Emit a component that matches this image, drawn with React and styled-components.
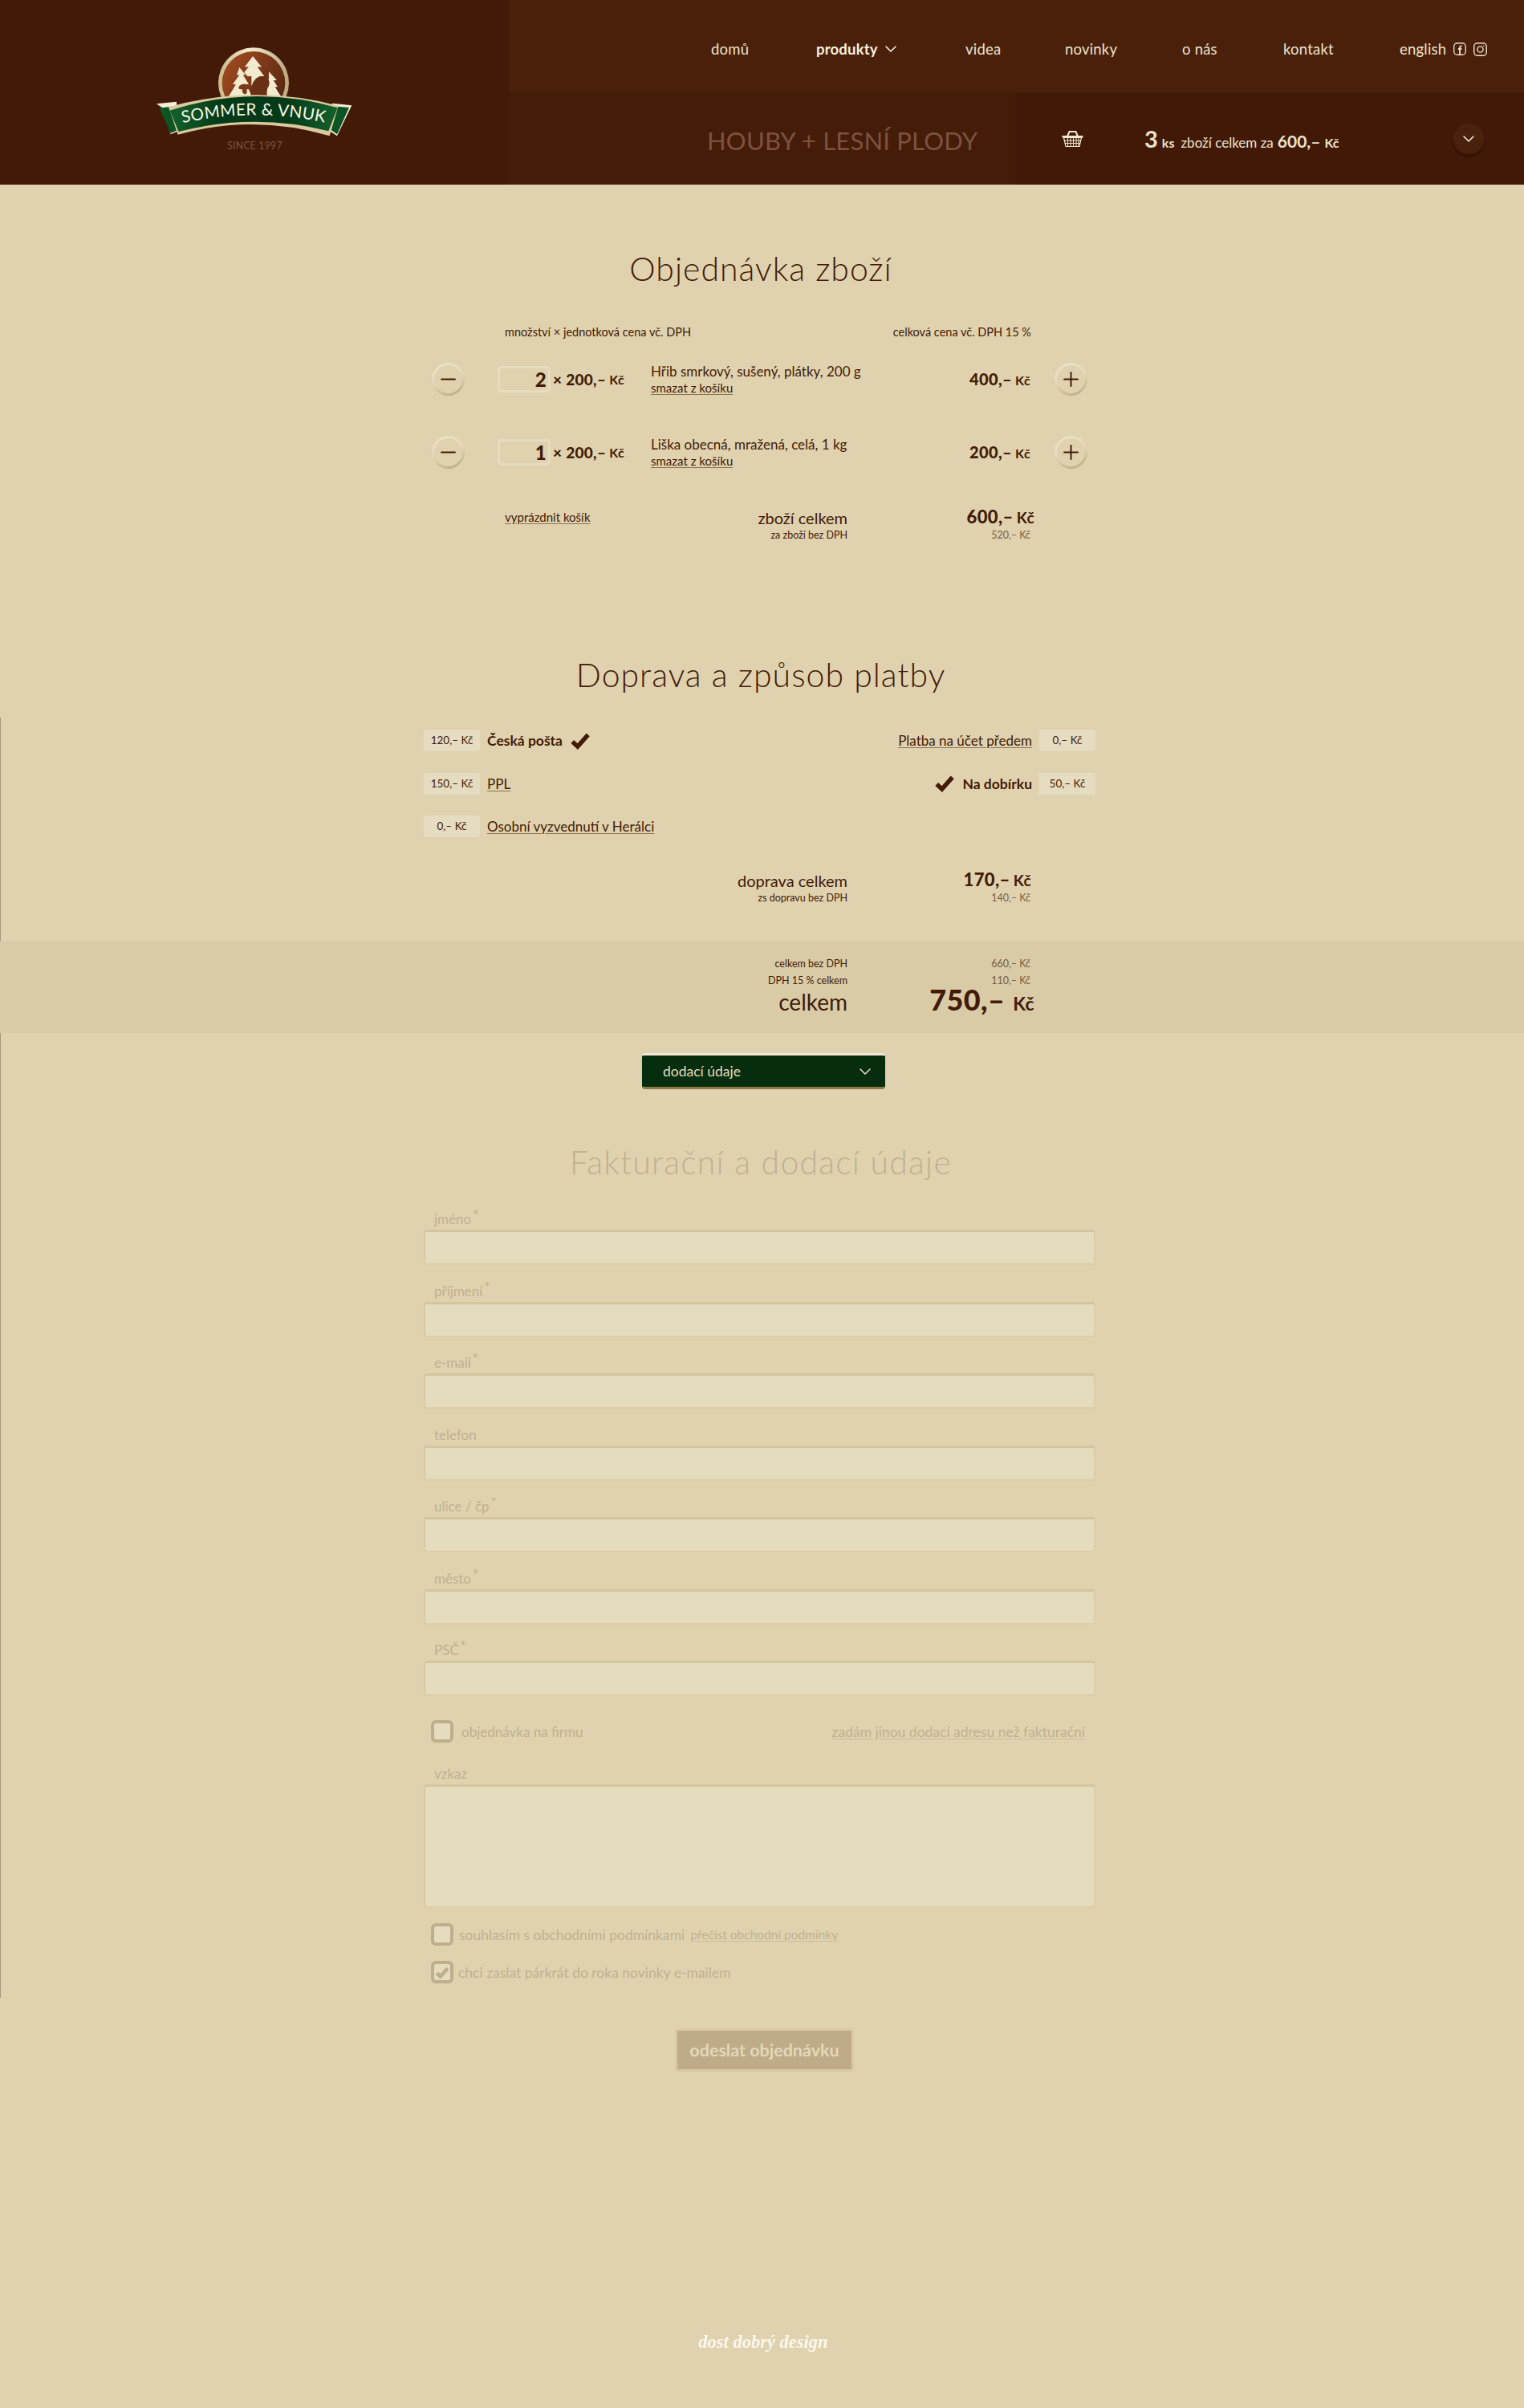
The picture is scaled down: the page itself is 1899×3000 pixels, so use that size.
import React from "react";
import styled, { createGlobalStyle } from "styled-components";
import { ChevronDown, Minus, Plus } from "lucide-react";

const DARK = "#421a07";
const FADED = "#bfb192";

const GlobalStyle = createGlobalStyle`
  * { box-sizing: border-box; }
  body {
    margin: 0;
    background: #e0d2ae;
    color: ${DARK};
    font-family: Lato, "Open Sans", sans-serif;
  }
`;

const Page = styled.div`
  min-height: 3000px;
  background: #e0d2ae;
`;

/* header */
const Header = styled.header`
  display: grid;
  grid-template-columns: 635px 630px 1fr;
  grid-template-rows: 115px 115px;
  height: 230px;
  background: #421a07;
  color: #f0e8d4;
`;

const LogoCell = styled.div`
  grid-row: 1 / 3;
  padding: 40px 0 0 170px;
`;

const Nav = styled.nav`
  grid-column: 2 / 4;
  display: grid;
  grid-template-columns: 131px 186px 124px 146px 126px 145px auto;
  align-items: center;
  padding: 7px 0 0 251px;
  height: 115px;
  background: #4a200a;
`;

const NavLink = styled.a`
  display: flex;
  align-items: center;
  gap: ${props => props.$gap || 4}px;
  font-size: 18.5px;
  font-weight: ${props => props.$active ? 700 : 400};
  letter-spacing: 0.2px;
  color: ${props => props.$active ? "#f8f1de" : "#ece3cd"};
`;

const CategoryBar = styled.div`
  display: flex;
  align-items: center;
  padding: 5px 0 0 246px;
  background: #451c08;
  color: #7d5140;
  font-size: 31px;
  letter-spacing: 0.2px;
  white-space: nowrap;
`;

const CartBar = styled.div`
  display: flex;
  align-items: center;
  padding-left: 58px;
  background: #421906;
`;

const CartInfo = styled.div`
  display: flex;
  align-items: baseline;
  margin-left: 76px;
  width: 384px;
  font-size: 17px;
  color: #ece3cd;
  white-space: nowrap;
`;

const CartCount = styled.b`
  font-size: 29px;
  font-weight: 700;
  margin-right: 5px;
`;

const CartStrong = styled.b`
  font-size: ${props => props.$size || 16}px;
  font-weight: 700;
  margin: ${props => props.$margin || "0"};
`;

const RoundToggle = styled.div`
  display: flex;
  align-items: center;
  justify-content: center;
  width: 40px;
  height: 40px;
  border-radius: 50%;
  background: #4a210c;
  box-shadow: 0 2px 2px #2e1104, inset 0 -1px 2px #3a1606;
  color: #f0e8d4;
`;

/* headings */
const Title = styled.h1`
  margin: ${props => props.$margin};
  font-size: 41px;
  font-weight: 300;
  line-height: 48px;
  text-align: center;
  letter-spacing: ${props => props.$spacing || 1}px;
  color: ${props => props.$faded ? FADED : DARK};
  padding-right: ${props => props.$shift || 3}px;
`;

const Content = styled.div`
  width: 837px;
  margin-left: 528px;
`;

/* cart */
const CartHead = styled.div`
  display: flex;
  justify-content: space-between;
  height: 20px;
  margin-top: 45px;
  padding: 0 80px 0 101px;
  font-size: 14.5px;
  line-height: 20px;
`;

const ItemRow = styled.div`
  display: flex;
  align-items: center;
  height: 41px;
  margin-top: ${props => props.$top}px;
  padding: 0 10px;
`;

const RoundButton = styled.button`
  display: flex;
  align-items: center;
  justify-content: center;
  flex: none;
  width: 41px;
  height: 41px;
  padding: 0;
  border: 3px solid transparent;
  border-radius: 50%;
  color: ${DARK};
  background:
    linear-gradient(#e0d2ae, #e0d2ae) padding-box,
    linear-gradient(160deg, #ebe3cb 0%, #e4dabd 45%, #b8a678 100%) border-box;
`;

const Qty = styled.div`
  display: flex;
  align-items: center;
  flex: none;
  width: 191px;
  margin-left: 41px;
  font-size: 19px;
  font-weight: 900;
  letter-spacing: 0.3px;
  white-space: nowrap;
`;

const QtyBox = styled.div`
  width: 66px;
  height: 33px;
  margin-right: 3px;
  padding-right: 2px;
  border: 3px solid #e6dcc1;
  border-radius: 5px;
  font-size: 24px;
  font-weight: 900;
  line-height: 27px;
  text-align: right;
`;

const ItemText = styled.div`
  flex: 1;
  font-size: 17px;
  line-height: 20px;
`;

const TextLink = styled.a`
  display: ${props => props.$block ? "block" : "inline"};
  font-size: ${props => props.$size || 15}px;
  line-height: ${props => props.$line || "inherit"};
  color: ${props => props.$faded ? FADED : DARK};
  text-decoration: underline;
  text-decoration-color: ${props => props.$faded ? "#c9bb9c" : "#8d7355"};
  text-underline-offset: 2px;
  white-space: nowrap;
`;

const Amount = styled.div`
  font-size: ${props => props.$size || 20}px;
  font-weight: 900;
  line-height: ${props => props.$line || 28}px;
  letter-spacing: 0.4px;
  text-align: right;
  white-space: nowrap;
`;

const Unit = styled.span`
  font-size: ${props => props.$size || 16}px;
  font-weight: 700;
  margin-left: ${props => props.$gap || 4}px;
`;

const ItemPrice = styled(Amount)`
  width: 200px;
  margin-right: 30px;
`;

/* summary rows */
const SumRow = styled.div`
  display: grid;
  grid-template-columns: 528px 228px;
  align-items: center;
  margin-top: ${props => props.$top || 0}px;
`;

const SumLabel = styled.div`
  display: flex;
  justify-content: ${props => props.$split ? "space-between" : "flex-end"};
  padding-left: ${props => props.$split ? 101 : 0}px;
  font-size: ${props => props.$size || 12.5}px;
  line-height: ${props => props.$line || 16}px;
  white-space: nowrap;
`;

const SumValue = styled.div`
  font-size: 12.5px;
  line-height: 16px;
  text-align: right;
  opacity: ${props => props.$muted ? 0.65 : 1};
`;

const BigAmount = styled(Amount)`
  margin-right: ${props => props.$pull || 0}px;
`;

/* shipping */
const ShippingSection = styled.section`
  padding: 15px 0 45px;
  margin-top: 29px;
  box-shadow: inset 1px 0 0 #a8987a;
`;

const ChoiceGrid = styled.div`
  display: grid;
  grid-template-columns: 1fr 1fr;
  grid-auto-rows: 27px;
  row-gap: 26.5px;
  margin-bottom: 39px;
`;

const Choice = styled.div`
  display: flex;
  align-items: center;
  justify-content: ${props => props.$right ? "flex-end" : "flex-start"};
  gap: 9px;
  font-size: 17.5px;
`;

const PriceChip = styled.div`
  flex: none;
  width: 70px;
  height: 27px;
  border-radius: 3px;
  background: #e6dcc1;
  font-size: 13.5px;
  line-height: 27px;
  text-align: center;
`;

const ChoiceName = styled.b`
  font-weight: 700;
  white-space: nowrap;
`;

/* totals band */
const TotalBand = styled.section`
  height: 115px;
  padding-top: 21px;
  background: #d9cba6;
`;

/* form */
const FormSection = styled.section`
  padding: 25px 0 18px;
  box-shadow: inset 1px 0 0 #a8987a;
`;

const DeliveryButton = styled.div`
  display: flex;
  align-items: center;
  justify-content: space-between;
  width: 303px;
  height: 45px;
  margin-left: 800px;
  padding: 0 13px 0 26px;
  border-top: 3px solid #f0e9d3;
  border-bottom: 3px solid #8c7a45;
  border-radius: 4px;
  background: #062d0d;
  color: #e6dcbd;
  font-size: 17.5px;
`;

const Field = styled.div`
  width: 837px;
  margin-top: ${props => props.$top || 0}px;
`;

const FieldLabel = styled.label`
  display: flex;
  align-items: flex-end;
  height: 45.5px;
  padding: 0 0 3px 13px;
  font-size: 17px;
  line-height: 20px;
  color: ${FADED};
`;

const Star = styled.sup`
  font-size: 17px;
  line-height: 0;
  position: relative;
  top: -15px;
  margin-left: 2px;
  vertical-align: baseline;
`;

const TextInput = styled.input`
  display: block;
  width: 837px;
  height: 44px;
  border: solid #dccea8;
  border-width: 3px 2px 2px;
  border-radius: 4px;
  background: #e5dbbd;
  border-top-color: #d3c59e;
  border-left-color: #d6c9a3;
  outline: none;
`;

const TextBox = styled(TextInput).attrs({ as: "textarea" })`
  height: 154px;
  resize: none;
`;

const CheckRow = styled.div`
  display: flex;
  align-items: center;
  justify-content: space-between;
  height: 28px;
  margin-top: ${props => props.$top}px;
  padding: 0 13px 0 9px;
  color: ${FADED};
  font-size: ${props => props.$size || 17.5}px;
`;

const CheckLabel = styled.div`
  display: flex;
  align-items: center;
  gap: ${props => props.$gap || 10}px;
  white-space: nowrap;
`;

const CheckBox = styled.div`
  display: flex;
  align-items: center;
  justify-content: center;
  width: 28px;
  height: 28px;
  border: 4px solid #bfae8c;
  border-radius: 6px;
  background: #e5dbbd;
`;

const SubmitButton = styled.div`
  width: 223px;
  height: 54px;
  margin: 38px 0 0 841px;
  border: 3px solid #d8caa4;
  border-radius: 4px;
  background: #bfab89;
  color: #e4d8b6;
  font-size: 21.5px;
  font-weight: 700;
  line-height: 48px;
  text-align: center;
  white-space: nowrap;
`;

const FooterNote = styled.footer`
  margin-top: 324px;
  padding-left: 3px;
  color: #fbf8ef;
  font-family: "Liberation Serif", serif;
  font-size: 22.5px;
  font-style: italic;
  font-weight: 700;
  line-height: 26px;
  text-align: center;
`;

function Logo() {
  return (
    <svg width="290" height="170" viewBox="0 0 870 510">
      <defs>
        <linearGradient id="medal" x1="0" y1="0" x2="1" y2="0.6">
          <stop offset="0" stopColor="#a84e22" />
          <stop offset="1" stopColor="#5a2912" />
        </linearGradient>
        <linearGradient id="ring" x1="0" y1="0" x2="1" y2="0">
          <stop offset="0" stopColor="#c9b98a" />
          <stop offset="0.45" stopColor="#f4ecd2" />
          <stop offset="1" stopColor="#b9a67a" />
        </linearGradient>
        <linearGradient id="band" x1="0" y1="0" x2="1" y2="0">
          <stop offset="0" stopColor="#14622c" />
          <stop offset="0.3" stopColor="#043a17" />
          <stop offset="0.7" stopColor="#043a17" />
          <stop offset="1" stopColor="#14622c" />
        </linearGradient>
        <path id="ribbonLine" d="M172 340 Q440 282 705 338" />
      </defs>
      <circle cx="438" cy="190" r="132" fill="url(#ring)" />
      <circle cx="438" cy="190" r="118" fill="url(#medal)" />
      <path
        fill="#f3ebcf"
        d="M435 90 L468 130 L452 130 L478 165 L458 165 L478 190 L430 200 L430 165 L415 165 L403 150 L420 130 L405 130 Z"
      />
      <path fill="#f3ebcf" d="M385 132 L408 160 L398 160 L420 195 L410 195 L432 240 L345 240 L372 195 L360 195 L385 160 L375 160 Z" />
      <path fill="#f3ebcf" d="M495 148 L525 180 L512 180 L528 205 L518 205 L540 240 L480 240 L495 170 Z" />
      <path fill="#6a3016" d="M428 240 C425 200 440 165 470 165 C495 165 505 190 490 210 C486 225 488 232 490 240 Z" />
      <path fill="#7a3a1a" d="M382 208 C385 190 420 190 424 208 C424 214 414 214 412 214 C414 222 414 232 408 232 C398 232 394 224 396 214 C390 214 382 214 382 208 Z" />
      <path fill="#f4eeda" d="M75 268 L150 260 L152 372 L128 382 L100 285 Z" />
      <path fill="#0c5424" d="M86 284 L128 278 L150 368 L128 378 Z" />
      <path fill="#f4eeda" d="M805 274 L732 266 L726 372 L750 388 Z" />
      <path fill="#0c5424" d="M795 282 L752 278 L728 366 L750 382 Z" />
      <path fill="#d9c99c" d="M120 280 Q440 192 755 275 L722 388 Q440 304 155 383 Z" />
      <path fill="url(#band)" d="M124 293 Q440 192 752 283 L718 370 Q440 300 158 372 Z" />
      <text fontFamily="Lato, sans-serif" fontSize="62" fill="#fbf6e6" textAnchor="middle" letterSpacing="1">
        <textPath href="#ribbonLine" startOffset="50%">SOMMER &amp; VNUK</textPath>
      </text>
      <text x="442" y="438" fontFamily="Lato, sans-serif" fontSize="38" fill="#7d5140" textAnchor="middle">SINCE 1997</text>
    </svg>
  );
}

function FacebookIcon() {
  return (
    <svg width="16" height="16" viewBox="0 0 16 16" fill="none" stroke="#ece3cd">
      <rect x="0.75" y="0.75" width="14.5" height="14.5" rx="4" strokeWidth="1.3" />
      <path d="M10.5 4.6 C8.8 4.2 8 5 8 6.4 V15 M6 8 H10.2" strokeWidth="1.8" />
    </svg>
  );
}

function InstagramIcon() {
  return (
    <svg width="17" height="17" viewBox="0 0 17 17" fill="none" stroke="#ece3cd">
      <rect x="0.75" y="0.75" width="15.5" height="15.5" rx="4" strokeWidth="1.4" />
      <circle cx="8.5" cy="8.5" r="3.6" strokeWidth="1.4" />
      <circle cx="12.8" cy="4.2" r="0.7" fill="#ece3cd" stroke="none" />
    </svg>
  );
}

function BasketIcon() {
  return (
    <svg width="27" height="22" viewBox="0 0 27 22" fill="none" stroke="#f0e8d4" style={{ flex: "none" }}>
      <path d="M7 8 L9.5 2 H17.5 L20 8" strokeWidth="2" />
      <path fill="#f0e8d4" d="M0.5 7 H26.5 V9.5 H0.5 Z" stroke="none" />
      <path d="M2.5 9.5 L5 20.5 H22 L24.5 9.5 Z" strokeWidth="1.2" />
      <path d="M3 13 H24 M4 16.5 H23 M7.5 10 V20 M11 10 V20 M14.5 10 V20 M18 10 V20 M21 10 V20" strokeWidth="1" />
    </svg>
  );
}

function Tick({ color = DARK, width = 26, height = 22, stroke = 5 }) {
  return (
    <svg width={width} height={height} viewBox="0 0 24 20" fill="none" style={{ flex: "none" }}>
      <path d="M3 11 L9 16.5 L21 3" stroke={color} strokeWidth={stroke} />
    </svg>
  );
}

const navItems = [
  { label: "domů" },
  { label: "produkty", active: true, arrow: true },
  { label: "videa" },
  { label: "novinky" },
  { label: "o nás" },
  { label: "kontakt" },
];

const cartItems = [
  { qty: 2, name: "Hřib smrkový, sušený, plátky, 200 g", total: "400,–" },
  { qty: 1, name: "Liška obecná, mražená, celá, 1 kg", total: "200,–" },
];

const shippingRows = [
  {
    left: { price: "120,– Kč", name: "Česká pošta", picked: true },
    right: { price: "0,– Kč", name: "Platba na účet předem" },
  },
  {
    left: { price: "150,– Kč", name: "PPL" },
    right: { price: "50,– Kč", name: "Na dobírku", picked: true },
  },
  { left: { price: "0,– Kč", name: "Osobní vyzvednutí v Herálci" } },
];

const fields = [
  { label: "jméno", required: true },
  { label: "příjmení", required: true },
  { label: "e-mail", required: true },
  { label: "telefon" },
  { label: "ulice / čp", required: true },
  { label: "město", required: true },
  { label: "PSČ", required: true },
];

function ChoiceItem({ item, right }) {
  if (!item) return <div />;
  const chip = <PriceChip>{item.price}</PriceChip>;
  const name = item.picked
    ? <ChoiceName>{item.name}</ChoiceName>
    : <TextLink $size={17}>{item.name}</TextLink>;
  const tick = item.picked ? <Tick /> : null;
  return right ? (
    <Choice $right>{tick}{name}{chip}</Choice>
  ) : (
    <Choice>{chip}{name}{tick}</Choice>
  );
}

export default function App() {
  return (
    <Page>
      <GlobalStyle />
      <Header>
        <LogoCell>
          <Logo />
        </LogoCell>
        <Nav>
          {navItems.map(item => (
            <NavLink key={item.label} $active={item.active}>
              {item.label}
              {item.arrow && <ChevronDown size={24} strokeWidth={1.6} />}
            </NavLink>
          ))}
          <NavLink $gap={9}>
            english
            <FacebookIcon />
            <InstagramIcon />
          </NavLink>
        </Nav>
        <CategoryBar>HOUBY + LESNÍ PLODY</CategoryBar>
        <CartBar>
          <BasketIcon />
          <CartInfo>
            <CartCount>3</CartCount>
            <CartStrong>ks</CartStrong>
            <span style={{ marginLeft: 8 }}>zboží celkem za</span>
            <CartStrong $size={21} $margin="0 5px 0 5px">600,–</CartStrong>
            <CartStrong>Kč</CartStrong>
          </CartInfo>
          <RoundToggle>
            <ChevronDown size={24} strokeWidth={1.6} />
          </RoundToggle>
        </CartBar>
      </Header>

      <Title $margin="81px 0 0">Objednávka zboží</Title>
      <Content>
        <CartHead>
          <span>množství × jednotková cena vč. DPH</span>
          <span>celková cena vč. DPH 15 %</span>
        </CartHead>
        {cartItems.map((item, i) => (
          <ItemRow key={item.name} $top={i === 0 ? 28 : 50}>
            <RoundButton><Minus size={29} strokeWidth={1.6} /></RoundButton>
            <Qty>
              <QtyBox>{item.qty}</QtyBox>
              × 200,–<Unit>Kč</Unit>
            </Qty>
            <ItemText>
              {item.name}
              <TextLink $block>smazat z košíku</TextLink>
            </ItemText>
            <ItemPrice>{item.total}<Unit>Kč</Unit></ItemPrice>
            <RoundButton><Plus size={29} strokeWidth={1.6} /></RoundButton>
          </ItemRow>
        ))}
        <SumRow $top={46}>
          <SumLabel $split $size={20} $line={28}>
            <TextLink $size={15} $line="26px">vyprázdnit košík</TextLink>
            <span>zboží celkem</span>
          </SumLabel>
          <BigAmount $size={22} $pull={-5}>600,–<Unit $size={19}>Kč</Unit></BigAmount>
        </SumRow>
        <SumRow>
          <SumLabel>za zboží bez DPH</SumLabel>
          <SumValue $muted>520,– Kč</SumValue>
        </SumRow>
      </Content>

      <Title $margin="142px 0 0">Doprava a způsob platby</Title>
      <ShippingSection>
        <Content>
          <ChoiceGrid>
            {shippingRows.map(row => (
              <React.Fragment key={row.left.name}>
                <ChoiceItem item={row.left} />
                <ChoiceItem item={row.right} right />
              </React.Fragment>
            ))}
          </ChoiceGrid>
          <SumRow>
            <SumLabel $size={20} $line={28}>doprava celkem</SumLabel>
            <BigAmount $size={22} $pull={-1}>170,–<Unit $size={19}>Kč</Unit></BigAmount>
          </SumRow>
          <SumRow>
            <SumLabel>zs dopravu bez DPH</SumLabel>
            <SumValue $muted>140,– Kč</SumValue>
          </SumRow>
        </Content>
      </ShippingSection>

      <TotalBand>
        <Content>
          <SumRow>
            <SumLabel>celkem bez DPH</SumLabel>
            <SumValue $muted>660,– Kč</SumValue>
          </SumRow>
          <SumRow $top={5}>
            <SumLabel>DPH 15 % celkem</SumLabel>
            <SumValue $muted>110,– Kč</SumValue>
          </SumRow>
          <SumRow $top={-3}>
            <SumLabel $size={28} $line={36}>celkem</SumLabel>
            <BigAmount $size={36} $line={36} $pull={-5}>750,–<Unit $size={23} $gap={10}>Kč</Unit></BigAmount>
          </SumRow>
        </Content>
      </TotalBand>

      <FormSection>
        <DeliveryButton>
          dodací údaje
          <ChevronDown size={24} strokeWidth={1.6} />
        </DeliveryButton>
        <Title $margin="67px 0 14.5px" $faded $spacing={1.2}>Fakturační a dodací údaje</Title>
        <Content>
          {fields.map(field => (
            <Field key={field.label}>
              <FieldLabel>
                {field.label}
                {field.required && <Star>*</Star>}
              </FieldLabel>
              <TextInput readOnly />
            </Field>
          ))}
          <CheckRow $top={30} $size={17}>
            <CheckLabel>
              <CheckBox />
              objednávka na firmu
            </CheckLabel>
            <TextLink $faded $size={17.5}>zadám jinou dodací adresu než fakturační</TextLink>
          </CheckRow>
          <Field $top={6.5}>
            <FieldLabel>vzkaz</FieldLabel>
            <TextBox readOnly />
          </Field>
          <CheckRow $top={19}>
            <CheckLabel $gap={7}>
              <CheckBox />
              <span>souhlasím s obchodními podmínkami</span>
              <TextLink $faded $size={15.5}>přečíst obchodní podmínky</TextLink>
            </CheckLabel>
          </CheckRow>
          <CheckRow $top={19}>
            <CheckLabel $gap={6}>
              <CheckBox><Tick color="#bfae8c" width={18} height={17} stroke={6} /></CheckBox>
              chci zaslat párkrát do roka novinky e-mailem
            </CheckLabel>
          </CheckRow>
        </Content>
      </FormSection>

      <SubmitButton>odeslat objednávku</SubmitButton>
      <FooterNote>dost dobrý design</FooterNote>
    </Page>
  );
}
